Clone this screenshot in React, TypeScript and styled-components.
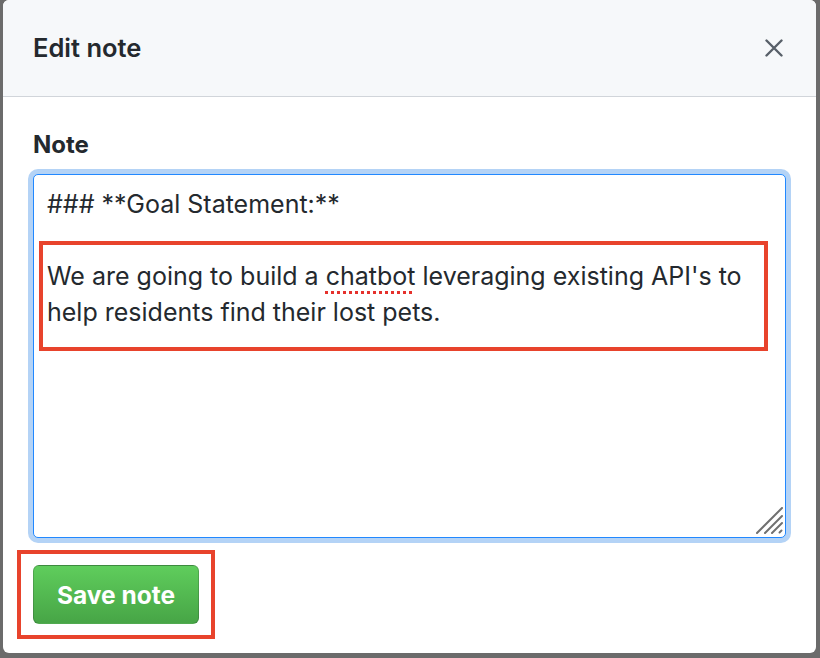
import React from "react";
import styled, { createGlobalStyle } from "styled-components";

const GlobalStyle = createGlobalStyle`
  html, body {
    margin: 0;
    padding: 0;
    background: #6b6b6b;
  }
  body {
    font-family: Inter, "Liberation Sans", Arial, sans-serif;
    color: #24292e;
  }
  * { box-sizing: border-box; }
`;

const Backdrop = styled.div`
  width: 820px;
  height: 658px;
  padding: 0 4px 5px 3px;
  background: #6b6b6b;
`;

const Dialog = styled.div`
  width: 813px;
  height: 653px;
  background: #ffffff;
  border-radius: 6px;
  overflow: hidden;
  display: flex;
  flex-direction: column;
`;

const Header = styled.div`
  height: 97px;
  flex: none;
  display: flex;
  align-items: center;
  justify-content: space-between;
  padding: 0 30px 0 30px;
  background: #f6f8fa;
  border-bottom: 1px solid #d1d5da;
`;

const Title = styled.h3`
  margin: 0;
  font-size: 25.5px;
  line-height: 32px;
  font-weight: 600;
  color: #24292e;
`;

const CloseButton = styled.button`
  width: 24px;
  height: 24px;
  padding: 0;
  border: 0;
  background: transparent;
  display: flex;
  align-items: center;
  justify-content: center;
  color: #586069;
  cursor: pointer;
`;

const Body = styled.div`
  padding: 32px 30px 0;
  display: flex;
  flex-direction: column;
  align-items: flex-start;
`;

const Label = styled.label`
  display: block;
  font-size: 24px;
  line-height: 32px;
  font-weight: 700;
  color: #24292e;
  margin-bottom: 13px;
`;

const Editor = styled.div`
  position: relative;
  width: 753px;
  height: 364px;
  padding: 11px 13px;
  border: 1px solid #2188ff;
  border-radius: 5px;
  box-shadow: 0 0 0 5px #b4d3f6;
  background: #fff;
  font-size: 25px;
  line-height: 36px;
  color: #24292e;
  white-space: pre-wrap;
`;

const Misspelled = styled.span`
  text-decoration: underline dotted #e5312c;
  text-decoration-thickness: 2.5px;
  text-underline-offset: 6px;
`;

const Highlight = styled.div<{ $top: number; $left: number; $width: number; $height: number }>`
  position: absolute;
  top: ${(p) => p.$top}px;
  left: ${(p) => p.$left}px;
  width: ${(p) => p.$width}px;
  height: ${(p) => p.$height}px;
  border: 4px solid #e8432c;
  pointer-events: none;
`;

const Grip = styled.svg`
  position: absolute;
  right: 2px;
  bottom: 3px;
`;

const Footer = styled.div`
  position: relative;
  margin-top: 27px;
`;

const FooterMark = styled.div`
  position: absolute;
  inset: -15px -16px;
  border: 4px solid #e8432c;
  pointer-events: none;
`;

const SaveButton = styled.button`
  height: 59px;
  padding: 0 23px;
  border: 1px solid rgba(27, 31, 35, 0.2);
  border-radius: 6px;
  background: linear-gradient(180deg, #5fcd5c 0%, #47a546 100%);
  color: #ffffff;
  font-family: Inter, "Liberation Sans", Arial, sans-serif;
  font-size: 24.5px;
  font-weight: 700;
  cursor: pointer;
`;

export default function App() {
  return (
    <>
      <GlobalStyle />
      <Backdrop>
        <Dialog>
          <Header>
            <Title>Edit note</Title>
            <CloseButton aria-label="Close">
              <svg width="18" height="18" viewBox="0 0 18 18">
                <path
                  d="M1.5 1.5 L16.5 16.5 M16.5 1.5 L1.5 16.5"
                  stroke="currentColor"
                  strokeWidth="2.4"
                  strokeLinecap="round"
                />
              </svg>
            </CloseButton>
          </Header>
          <Body>
            <Label>Note</Label>
            <Editor>
              {"### **Goal Statement:**\n\nWe are going to build a "}
              <Misspelled>chatbot</Misspelled>
              {" leveraging existing API's to help residents find their lost pets."}
              <Highlight $top={66} $left={5} $width={729} $height={110} />
              <Grip width="27" height="27" viewBox="0 0 27 27">
                <g stroke="#707070" strokeWidth="2" strokeLinecap="round">
                  <path d="M1 26 L26 1" />
                  <path d="M9 26 L26 9" />
                  <path d="M16 26 L26 16" />
                  <path d="M23.5 25.5 L25.5 23.5" />
                </g>
              </Grip>
            </Editor>
            <Footer>
              <SaveButton>Save note</SaveButton>
              <FooterMark />
            </Footer>
          </Body>
        </Dialog>
      </Backdrop>
    </>
  );
}
